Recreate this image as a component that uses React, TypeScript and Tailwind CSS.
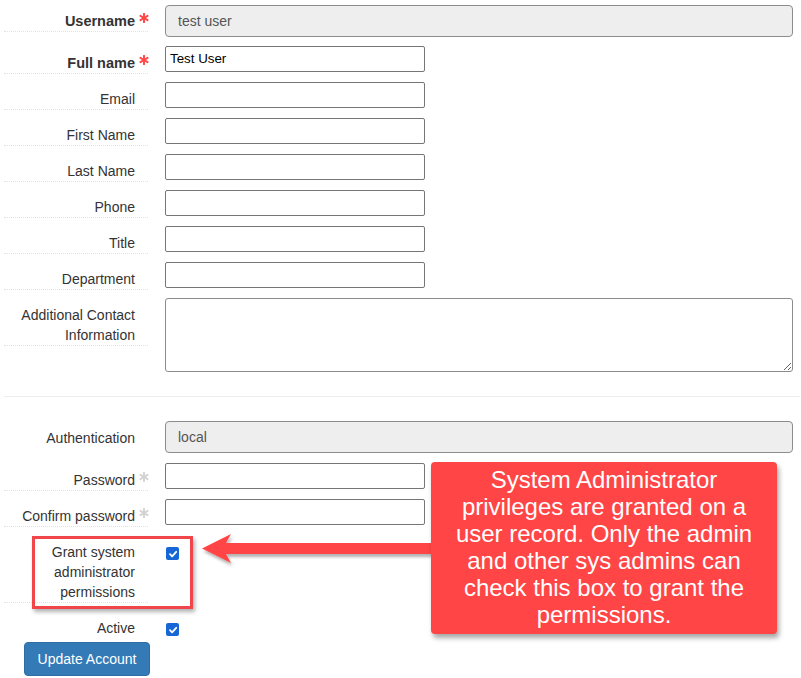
import React from "react";

function Star({ color }: { color: string }) {
  return (
    <svg width="10" height="10" viewBox="0 0 10 10" className="block">
      <g stroke={color} strokeWidth="2" strokeLinecap="round">
        <line x1="5" y1="0.8" x2="5" y2="9.2" />
        <line x1="1.4" y1="2.9" x2="8.6" y2="7.1" />
        <line x1="1.4" y1="7.1" x2="8.6" y2="2.9" />
      </g>
    </svg>
  );
}

function Label({
  children,
  req,
  bold,
  dotted = true,
  pt = "pt-[7px]",
}: {
  children: React.ReactNode;
  req?: "red" | "gray";
  bold?: boolean;
  dotted?: boolean;
  pt?: string;
}) {
  return (
    <div
      className={`w-[144px] shrink-0 flex justify-end ${pt} leading-[20px] ${
        dotted ? "border-b border-dotted border-[#e2e2e2]" : ""
      }`}
    >
      <div className={`text-right ${bold ? "font-bold text-[14.5px]" : ""}`}>{children}</div>
      <div className="w-[13px] shrink-0 relative">
        {req && (
          <div className="absolute left-[4px] top-[2px]">
            <Star color={req === "red" ? "#ff4a4a" : "#d4d4d4"} />
          </div>
        )}
      </div>
    </div>
  );
}

function SmallInput({ value }: { value?: string }) {
  return (
    <div className="ml-[17px] w-[260px] h-[26px] border border-[#767676] rounded-[2px] bg-white pl-[4px] text-[13.33px] leading-[24px] text-black">
      {value}
    </div>
  );
}

function Check() {
  return (
    <div className="ml-[18px] w-[13px] h-[13px] rounded-[2px] bg-[#1766d6] flex items-center justify-center">
      <svg width="10" height="10" viewBox="0 0 10 10">
        <path d="M2 5.2 L4.1 7.3 L8.2 2.8" fill="none" stroke="white" strokeWidth="1.8" strokeLinecap="round" strokeLinejoin="round" />
      </svg>
    </div>
  );
}

export default function App() {
  const rows = ["Email", "First Name", "Last Name", "Phone", "Title", "Department"];
  return (
    <div className="relative w-[801px] h-[678px] overflow-hidden bg-white pl-[4px] pt-[5px] text-[14px] text-[#333] font-['Liberation_Sans',Arial,sans-serif]">
      {/* Username */}
      <div className="flex items-start mb-[9px]">
        <Label req="red" bold pt="pt-[6px]">
          Username
        </Label>
        <div className="ml-[17px] flex-1 mr-[8px] h-[32px] border border-[#8c8c8c] rounded-[4px] bg-[#eeeeee] pl-[12px] leading-[30px] text-[#555]">
          test user
        </div>
      </div>

      {/* Full name */}
      <div className="flex items-start mb-[8px]">
        <Label req="red" bold>
          Full name
        </Label>
        <SmallInput value="Test User" />
      </div>

      {rows.map((r) => (
        <div key={r} className="flex items-start mb-[8px]">
          <Label>{r}</Label>
          <SmallInput />
        </div>
      ))}

      {/* Additional contact */}
      <div className="flex items-start">
        <Label>
          Additional Contact
          <br />
          Information
        </Label>
        <textarea
          readOnly
          className="ml-[17px] flex-1 mr-[8px] h-[74px] border border-[#8c8c8c] rounded-[3px] bg-white resize-both outline-none"
        />
      </div>

      <div className="mt-[24px] h-px bg-[#eeeeee] mr-[1px]" />

      {/* Authentication */}
      <div className="flex items-start mt-[24px] mb-[10px]">
        <Label dotted={false}>Authentication</Label>
        <div className="ml-[17px] flex-1 mr-[8px] h-[32px] border border-[#8c8c8c] rounded-[4px] bg-[#eeeeee] pl-[12px] leading-[30px] text-[#555]">
          local
        </div>
      </div>

      <div className="flex items-start mb-[8px]">
        <Label req="gray">Password</Label>
        <SmallInput />
      </div>
      <div className="flex items-start mb-[8px]">
        <Label req="gray">Confirm password</Label>
        <SmallInput />
      </div>

      <div className="flex items-start mb-[8px]">
        <Label>
          Grant system
          <br />
          administrator
          <br />
          permissions
        </Label>
        <div className="pt-[12px]">
          <Check />
        </div>
      </div>

      <div className="flex items-start mb-[4px]">
        <Label dotted={false}>Active</Label>
        <div className="pt-[12px]">
          <Check />
        </div>
      </div>

      <button className="ml-[20px] w-[126px] h-[34px] rounded-[4px] bg-[#337ab7] border border-[#2e6da4] text-white text-[14px] leading-[32px] text-center">
        Update Account
      </button>

      {/* Annotation: highlight box */}
      <div className="absolute left-[32px] top-[536px] w-[161px] h-[73px] border-[3px] border-[#f0464a] shadow-[2px_3px_4px_rgba(0,0,0,0.3)]" />

      {/* Annotation: arrow */}
      <svg
        className="absolute left-[195px] top-[526px]"
        width="245"
        height="48"
        viewBox="0 0 245 48"
      >
        <defs>
          <filter id="sh" x="-10%" y="-30%" width="120%" height="180%">
            <feDropShadow dx="1.5" dy="3" stdDeviation="1.8" floodColor="#000" floodOpacity="0.3" />
          </filter>
        </defs>
        <polygon
          points="7,22.5 36,8 31,17 240,17 240,28 31,28 36,37"
          fill="#ff4545"
          filter="url(#sh)"
        />
      </svg>

      {/* Annotation: callout */}
      <div className="absolute left-[431px] top-[462px] w-[346px] h-[172px] rounded-[4px] bg-[#ff4545] shadow-[2px_4px_5px_rgba(0,0,0,0.35)] pt-[4px] text-center text-white text-[24px] leading-[27px]">
        <div>System Administrator</div>
        <div>privileges are granted on a</div>
        <div>user record. Only the admin</div>
        <div>and other sys admins can</div>
        <div>check this box to grant the</div>
        <div>permissions.</div>
      </div>
    </div>
  );
}
